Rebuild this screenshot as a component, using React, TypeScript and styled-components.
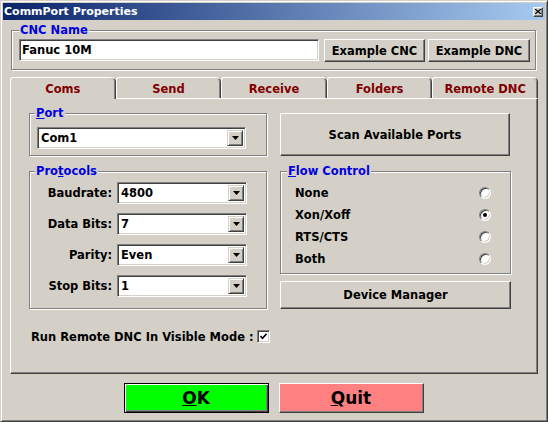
import React from 'react';
import styled, { createGlobalStyle, css } from 'styled-components';

const FACE = '#d4d0c8';
const FONT = `"DejaVu Sans", Verdana, sans-serif`;

const Global = createGlobalStyle`
  html, body { margin: 0; padding: 0; background: ${FACE}; }
  body { font-family: ${FONT}; }
  *, *::before, *::after { box-sizing: border-box; }
`;

const Window = styled.div`
  width: 548px;
  height: 422px;
  background: ${FACE};
  border: 1px solid;
  border-color: ${FACE} #404040 #404040 ${FACE};
  box-shadow: inset 1px 1px #fff, inset -1px -1px #808080;
  padding: 2px;
  display: flex;
  flex-direction: column;
  font-family: ${FONT};
  font-size: 11.5px;
  font-weight: bold;
  color: #000;
`;

const TitleBar = styled.div`
  height: 17px;
  display: flex;
  align-items: center;
  justify-content: space-between;
  padding: 0 2px 0 1px;
  background: linear-gradient(to right, #0a246a, #a6caf0);
  color: #fff;
  font-size: 11px;
  font-weight: bold;
`;

const CloseBtn = styled.div`
  width: 10px;
  height: 10px;
  background: ${FACE};
  border: 1px solid;
  border-color: #fff #404040 #404040 #fff;
  box-shadow: inset -1px -1px #808080;
  display: flex;
  align-items: center;
  justify-content: center;
`;

const Body = styled.div`
  flex: 1;
  display: flex;
  flex-direction: column;
  padding: 3px 9px 0 8px;
`;

const Group = styled.fieldset<{ $pad: string }>`
  margin: 0;
  min-width: 0;
  border: 1px solid #808080;
  box-shadow: inset 1px 1px #fff, 1px 1px #fff;
  padding: ${(p) => p.$pad};
`;

const Legend = styled.legend<{ $ml: number }>`
  color: #0000e0;
  background: ${FACE};
  padding: 0 1px;
  margin-left: ${(p) => p.$ml}px;
  line-height: 14px;
  height: 14px;
`;

const NameRow = styled.div`
  display: flex;
  align-items: flex-start;
`;

const TextField = styled.div<{ $w: number }>`
  width: ${(p) => p.$w}px;
  height: 22px;
  background: #fff;
  border: 1px solid;
  border-color: #808080 #fff #fff #808080;
  box-shadow: inset 1px 1px #404040, inset -1px -1px ${FACE};
  display: flex;
  align-items: center;
  padding-left: 2px;
  margin-right: 5px;
`;

const Button = styled.div<{ $w: number; $h: number; $mr?: number }>`
  width: ${(p) => p.$w}px;
  height: ${(p) => p.$h}px;
  margin-right: ${(p) => p.$mr ?? 0}px;
  background: ${FACE};
  border: 1px solid;
  border-color: #fff #404040 #404040 #fff;
  box-shadow: inset -1px -1px #808080;
  display: flex;
  align-items: center;
  justify-content: center;
  flex-shrink: 0;
`;

const Tabs = styled.div`
  margin: 7px -2px 0 -1px;
  display: flex;
  flex-direction: column;
`;

const TabStrip = styled.div`
  display: flex;
  height: 21px;
  position: relative;
  z-index: 1;
`;

const Tab = styled.div<{ $active?: boolean }>`
  flex: 1;
  height: 21px;
  display: flex;
  align-items: center;
  justify-content: center;
  background: ${FACE};
  color: #800000;
  border-top: 1px solid #fff;
  border-left: 1px solid #fff;
  border-right: 1px solid #404040;
  box-shadow: inset -1px 0 #808080;
  border-radius: 3px 5px 0 0;
  padding-top: 1px;
  ${(p) =>
    p.$active &&
    css`
      height: 22px;
      margin-bottom: -1px;
    `}
`;

const Panel = styled.div`
  height: 276px;
  border-top: 1px solid #fff;
  border-left: 1px solid #fff;
  border-right: 1px solid #404040;
  border-bottom: 1px solid #404040;
  box-shadow: inset -1px -1px #808080;
  padding: 7px 0 0 18px;
  display: flex;
  flex-direction: column;
`;

const Columns = styled.div`
  display: grid;
  grid-template-columns: 238px 231px;
  column-gap: 13px;
  align-items: start;
`;

const Column = styled.div`
  display: flex;
  flex-direction: column;
  gap: 8px;
`;

const RightColumn = styled.div`
  display: flex;
  flex-direction: column;
  padding-top: 7px;
`;

const Spacer = styled.div<{ $h: number }>`
  height: ${(p) => p.$h}px;
`;

const FormGrid = styled.div`
  display: grid;
  grid-template-columns: 74px 130px;
  column-gap: 5px;
  row-gap: 9px;
  align-items: center;
`;

const FieldLabel = styled.div`
  text-align: right;
  white-space: nowrap;
`;

const ComboBox = styled.div<{ $w: number }>`
  width: ${(p) => p.$w}px;
  height: 22px;
  background: #fff;
  border: 1px solid;
  border-color: #808080 #fff #fff #808080;
  box-shadow: inset 1px 1px #404040, inset -1px -1px ${FACE};
  padding: 2px;
  display: flex;
`;

const ComboText = styled.div`
  flex: 1;
  display: flex;
  align-items: center;
  padding-left: 1px;
`;

const DropBtn = styled.div`
  width: 16px;
  background: ${FACE};
  border: 1px solid;
  border-color: ${FACE} #404040 #404040 ${FACE};
  box-shadow: inset 1px 1px #fff, inset -1px -1px #808080;
  display: flex;
  align-items: center;
  justify-content: center;
`;

const RadioRow = styled.div`
  height: 22px;
  display: flex;
  align-items: center;
  justify-content: space-between;
`;

const RadioCircle = styled.div<{ $checked?: boolean }>`
  width: 12px;
  height: 12px;
  border-radius: 50%;
  background: #fff;
  border: 1px solid;
  border-color: #808080 #fff #fff #808080;
  box-shadow: inset 1px 1px #404040, inset -1px -1px ${FACE};
  display: flex;
  align-items: center;
  justify-content: center;
  &::after {
    content: '';
    width: 4px;
    height: 4px;
    border-radius: 50%;
    background: ${(p) => (p.$checked ? '#000' : 'transparent')};
  }
`;

const CheckRow = styled.div`
  display: flex;
  align-items: center;
  margin: 21px 0 0 2px;
  height: 13px;
  gap: 3px;
`;

const CheckBox = styled.div`
  width: 13px;
  height: 13px;
  background: #fff;
  border: 1px solid;
  border-color: #808080 #fff #fff #808080;
  box-shadow: inset 1px 1px #404040, inset -1px -1px ${FACE};
  display: flex;
  align-items: center;
  justify-content: center;
`;

const Footer = styled.div`
  display: flex;
  justify-content: center;
  gap: 10px;
  margin-top: 9px;
`;

const BigButton = styled.div<{ $bg: string; $default?: boolean }>`
  width: 145px;
  height: 30px;
  background: ${(p) => p.$bg};
  display: flex;
  align-items: center;
  justify-content: center;
  font-size: 17px;
  font-weight: bold;
  border: 1px solid;
  ${(p) =>
    p.$default
      ? css`
          border-color: #000;
          box-shadow: inset 1px 1px #fff, inset -1px -1px #404040, inset -2px -2px #808080;
        `
      : css`
          border-color: #fff #404040 #404040 #fff;
          box-shadow: inset -1px -1px #808080;
        `}
`;

const Arrow = () => (
  <svg width="7" height="4" viewBox="0 0 7 4">
    <polygon points="0,0 7,0 3.5,4" fill="#000" />
  </svg>
);

const Combo = ({ value, w }: { value: string; w: number }) => (
  <ComboBox $w={w}>
    <ComboText>{value}</ComboText>
    <DropBtn>
      <Arrow />
    </DropBtn>
  </ComboBox>
);

const protocols: [string, string][] = [
  ['Baudrate:', '4800'],
  ['Data Bits:', '7'],
  ['Parity:', 'Even'],
  ['Stop Bits:', '1'],
];

const flows = ['None', 'Xon/Xoff', 'RTS/CTS', 'Both'];
const tabs = ['Coms', 'Send', 'Receive', 'Folders', 'Remote DNC'];

export default function App() {
  return (
    <>
      <Global />
      <Window>
        <TitleBar>
          <span>CommPort Properties</span>
          <CloseBtn>
            <svg width="6" height="5" viewBox="0 0 6 5">
              <path d="M0 0 L6 5 M6 0 L0 5" stroke="#000" strokeWidth="1.3" />
            </svg>
          </CloseBtn>
        </TitleBar>
        <Body>
          <Group $pad="2px 5px 7px 7px">
            <Legend $ml={0}>CNC Name</Legend>
            <NameRow>
              <TextField $w={300}>Fanuc 10M</TextField>
              <Button $w={101} $h={23} $mr={3}>Example CNC</Button>
              <Button $w={102} $h={23}>Example DNC</Button>
            </NameRow>
          </Group>
          <Tabs>
            <TabStrip>
              {tabs.map((t, i) => (
                <Tab key={t} $active={i === 0}>{t}</Tab>
              ))}
            </TabStrip>
            <Panel>
              <Columns>
                <Column>
                  <Group $pad="7px 0 6px 7px">
                    <Legend $ml={-2}><u>P</u>ort</Legend>
                    <Combo value="Com1" w={209} />
                  </Group>
                  <Group $pad="4px 0 11px 8px">
                    <Legend $ml={-3}>Pro<u>t</u>ocols</Legend>
                    <FormGrid>
                      {protocols.map(([l, v]) => (
                        <React.Fragment key={l}>
                          <FieldLabel>{l}</FieldLabel>
                          <Combo value={v} w={130} />
                        </React.Fragment>
                      ))}
                    </FormGrid>
                  </Group>
                </Column>
                <RightColumn>
                  <Button $w={230} $h={43}>Scan Available Ports</Button>
                  <Spacer $h={8} />
                  <Group $pad="4px 19px 3px 14px">
                    <Legend $ml={-8}><u>F</u>low Control</Legend>
                    {flows.map((f) => (
                      <RadioRow key={f}>
                        <span>{f}</span>
                        <RadioCircle $checked={f === 'Xon/Xoff'} />
                      </RadioRow>
                    ))}
                  </Group>
                  <Spacer $h={7} />
                  <Button $w={231} $h={28}>Device Manager</Button>
                </RightColumn>
              </Columns>
              <CheckRow>
                <span>Run Remote DNC In Visible Mode :</span>
                <CheckBox>
                  <svg width="7" height="7" viewBox="0 0 7 7">
                    <polyline points="0.5,3 2.5,5.2 6.5,0.8" fill="none" stroke="#000" strokeWidth="1.6" />
                  </svg>
                </CheckBox>
              </CheckRow>
            </Panel>
          </Tabs>
          <Footer>
            <BigButton $bg="#00ff00" $default>
              <span><u>O</u>K</span>
            </BigButton>
            <BigButton $bg="#ff8080">
              <span><u>Q</u>uit</span>
            </BigButton>
          </Footer>
        </Body>
      </Window>
    </>
  );
}
